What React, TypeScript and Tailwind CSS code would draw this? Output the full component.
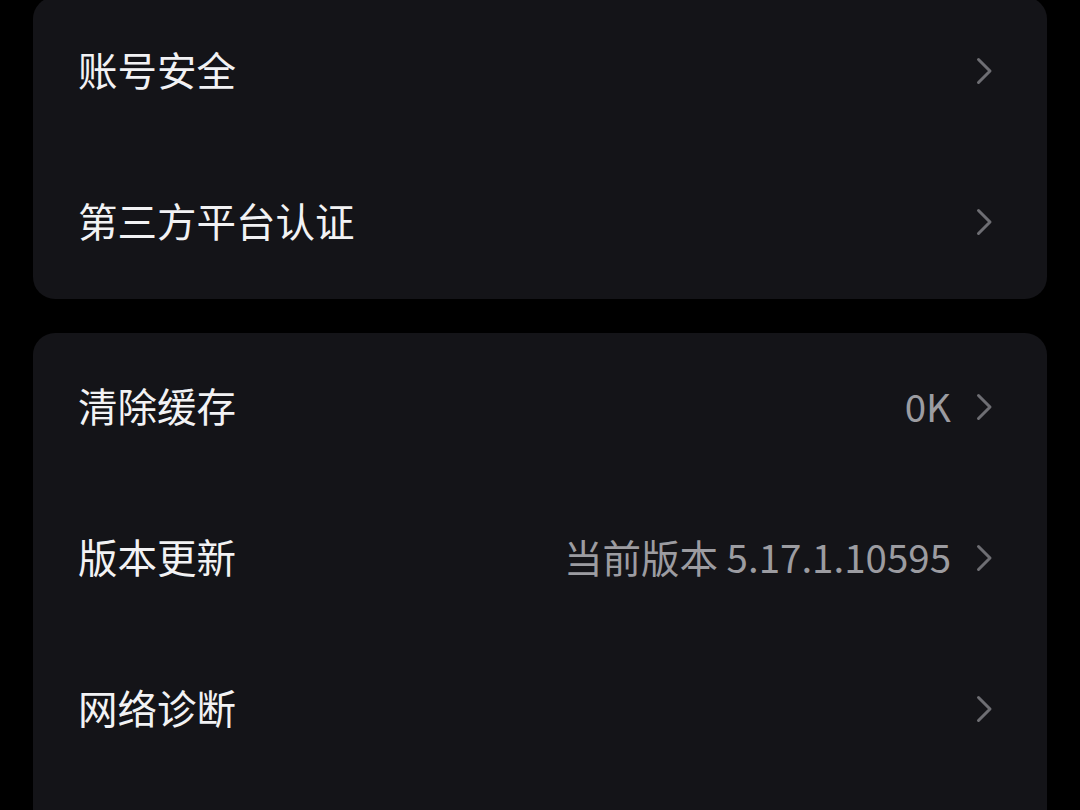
const font = { fontFamily: '"Noto Sans CJK SC", "Noto Sans", sans-serif' }

interface RowProps {
  label: string
  value?: string
}

function Chevron() {
  return (
    <svg width="18" height="28" viewBox="0 0 18 28" fill="none" className="shrink-0 mt-[4px]">
      <path d="M3.5 2.5 L15 14 L3.5 25.5" stroke="#6e6e73" strokeWidth="3" strokeLinecap="round" strokeLinejoin="round" />
    </svg>
  )
}

function Row({ label, value }: RowProps) {
  return (
    <div className="flex items-center h-[151px] pb-[7px] pl-[45px] pr-[54px]">
      <span className="flex-1 text-[39.5px] leading-none text-[#f2f2f4]">{label}</span>
      {value && <span className="mr-[24px] text-[38.5px] leading-none text-[#9c9ca1]">{value}</span>}
      <Chevron />
    </div>
  )
}

export default function App() {
  return (
    <div className="h-[810px] overflow-hidden bg-black px-[33px]" style={font}>
      <div className="-mt-[3px] rounded-[22px] bg-[#141418]">
        <Row label="账号安全" />
        <Row label="第三方平台认证" />
      </div>
      <div className="mt-[34px] rounded-[22px] bg-[#141418]">
        <Row label="清除缓存" value="0K" />
        <Row label="版本更新" value="当前版本 5.17.1.10595" />
        <Row label="网络诊断" />
        <div className="h-[151px]" />
      </div>
    </div>
  )
}
